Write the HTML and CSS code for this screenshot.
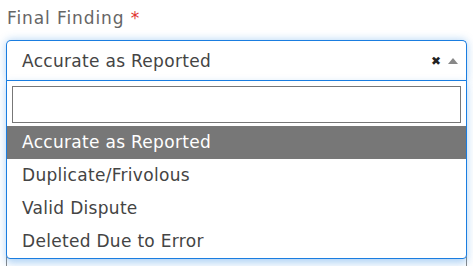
FILE: index.html
```html
<!DOCTYPE html>
<html lang="en">
<head>
    <meta charset="UTF-8">
    <meta name="viewport" content="width=device-width, initial-scale=1.0">
    <title>Final Finding</title>
    <link rel="stylesheet" href="styles.css">
</head>
<body>
    <div class="form-group">
        <label class="form-label">Final Finding <span class="required">*</span></label>

        <div class="select open">
            <div class="select-selection">
                <span class="select-value">Accurate as Reported</span>
                <span class="select-clear">&#10006;</span>
                <span class="select-arrow"></span>
            </div>
            <div class="select-dropdown">
                <div class="select-search">
                    <input type="text" class="search-input">
                </div>
                <ul class="select-options">
                    <li class="option highlighted">Accurate as Reported</li>
                    <li class="option">Duplicate/Frivolous</li>
                    <li class="option">Valid Dispute</li>
                    <li class="option">Deleted Due to Error</li>
                </ul>
            </div>
        </div>

        <div class="next-control"></div>
    </div>
</body>
</html>
```

FILE: styles.css
```css
:root {
    --focus-color: #1a7de0;
    --text-color: #444444;
    --label-color: #666666;
    --highlight: #777777;
}

* {
    margin: 0;
    padding: 0;
    box-sizing: border-box;
}

body {
    font-family: 'DejaVu Sans', 'Noto Sans', sans-serif;
    background-color: #ffffff;
    color: var(--text-color);
    overflow: hidden;
}

.form-group {
    padding: 7px 6px 0 6px;
    position: relative;
}

.form-label {
    display: block;
    font-size: 17px;
    line-height: 22px;
    letter-spacing: 0.9px;
    color: var(--label-color);
    padding-left: 1px;
    margin-bottom: 11px;
}

.required {
    color: #e0342f;
}

.select {
    position: relative;
    z-index: 10;
}

.select-selection {
    height: 41px;
    border: 1px solid var(--focus-color);
    border-bottom: none;
    border-radius: 5px 5px 0 0;
    display: flex;
    align-items: center;
    padding: 0 8px 0 15px;
    box-shadow: 0 0 8px rgba(26, 125, 224, 0.35);
    background-color: #fff;
}

.select-value {
    flex: 1;
    font-size: 17px;
    letter-spacing: 0.3px;
}

.select-clear {
    font-size: 12px;
    font-weight: bold;
    color: #222;
    margin-right: 7px;
}

.select-arrow {
    width: 0;
    height: 0;
    border-left: 5px solid transparent;
    border-right: 5px solid transparent;
    border-bottom: 6px solid #888;
}

.select-dropdown {
    position: absolute;
    left: 0;
    right: 0;
    top: 40px;
    background-color: #fff;
    border: 1px solid var(--focus-color);
    border-radius: 0 0 4px 4px;
    box-shadow: 0 4px 8px rgba(26, 125, 224, 0.35);
}

.select-search {
    padding: 5px 5px 3px 5px;
}

.search-input {
    display: block;
    width: 100%;
    height: 37px;
    border: 1px solid #777;
    outline: none;
}

.select-options {
    list-style: none;
}

.option {
    height: 33px;
    line-height: 33px;
    padding-left: 15px;
    font-size: 17px;
    letter-spacing: 0.3px;
    color: var(--text-color);
}

.option.highlighted {
    background-color: var(--highlight);
    color: #fff;
}

.next-control {
    height: 165px;
    margin-top: 20px;
    border: 1px solid #888;
    border-bottom: none;
    border-radius: 4px 4px 0 0;
}
```
